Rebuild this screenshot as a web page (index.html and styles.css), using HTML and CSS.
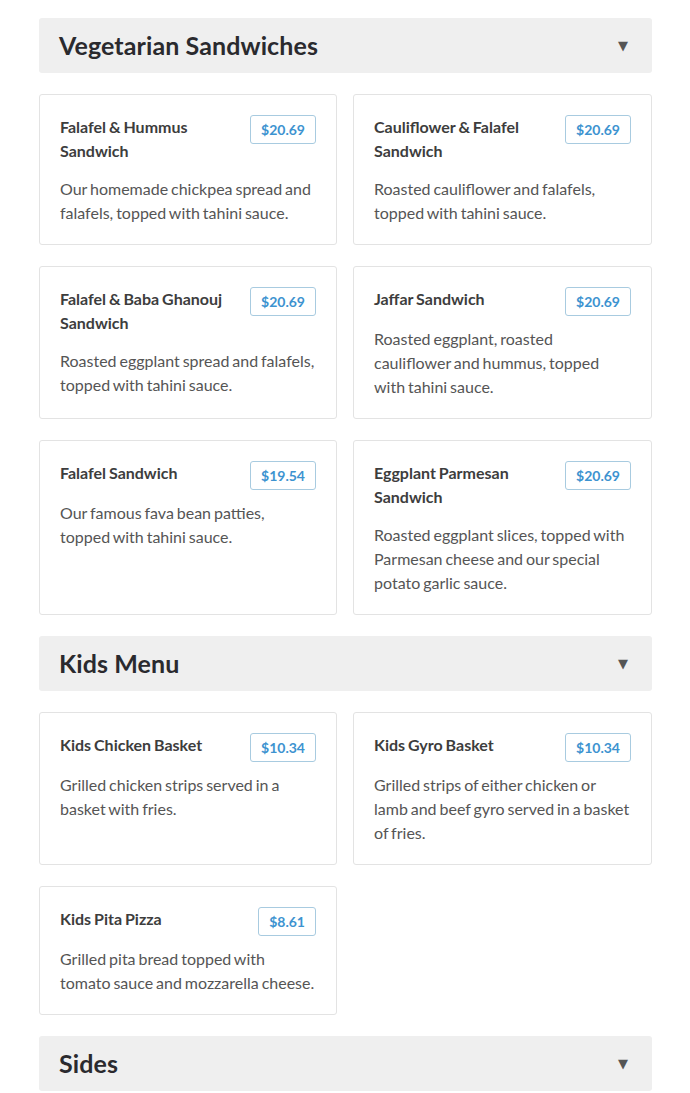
FILE: index.html
```html
<!DOCTYPE html>
<html>
<head>
<meta charset="utf-8">
<link rel="stylesheet" href="styles.css">
</head>
<body>
<div class="menu">
  <section class="section">
    <div class="section-head"><h2 class="section-title">Vegetarian Sandwiches</h2><span class="arrow">▼</span></div>
    <div class="grid">
      <div class="card"><div class="card-top"><h3 class="item-name">Falafel &amp; Hummus Sandwich</h3><span class="price">$20.69</span></div><p class="desc">Our homemade chickpea spread and falafels, topped with tahini sauce.</p></div>
      <div class="card"><div class="card-top"><h3 class="item-name">Cauliflower &amp; Falafel Sandwich</h3><span class="price">$20.69</span></div><p class="desc">Roasted cauliflower and falafels, topped with tahini sauce.</p></div>
      <div class="card"><div class="card-top"><h3 class="item-name">Falafel &amp; Baba Ghanouj Sandwich</h3><span class="price">$20.69</span></div><p class="desc">Roasted eggplant spread and falafels, topped with tahini sauce.</p></div>
      <div class="card"><div class="card-top"><h3 class="item-name">Jaffar Sandwich</h3><span class="price">$20.69</span></div><p class="desc">Roasted eggplant, roasted cauliflower and hummus, topped with tahini sauce.</p></div>
      <div class="card"><div class="card-top"><h3 class="item-name">Falafel Sandwich</h3><span class="price">$19.54</span></div><p class="desc">Our famous fava bean patties, topped with tahini sauce.</p></div>
      <div class="card"><div class="card-top"><h3 class="item-name">Eggplant Parmesan Sandwich</h3><span class="price">$20.69</span></div><p class="desc">Roasted eggplant slices, topped with Parmesan cheese and our special potato garlic sauce.</p></div>
    </div>
  </section>
  <section class="section">
    <div class="section-head"><h2 class="section-title">Kids Menu</h2><span class="arrow">▼</span></div>
    <div class="grid">
      <div class="card"><div class="card-top"><h3 class="item-name">Kids Chicken Basket</h3><span class="price">$10.34</span></div><p class="desc">Grilled chicken strips served in a basket with fries.</p></div>
      <div class="card"><div class="card-top"><h3 class="item-name">Kids Gyro Basket</h3><span class="price">$10.34</span></div><p class="desc">Grilled strips of either chicken or lamb and beef gyro served in a basket of fries.</p></div>
      <div class="card"><div class="card-top"><h3 class="item-name">Kids Pita Pizza</h3><span class="price">$8.61</span></div><p class="desc">Grilled pita bread topped with tomato sauce and mozzarella cheese.</p></div>
    </div>
  </section>
  <section class="section">
    <div class="section-head"><h2 class="section-title">Sides</h2><span class="arrow">▼</span></div>
  </section>
</div>
</body>
</html>
```
FILE: styles.css
```css
* { box-sizing: border-box; }
html, body { margin: 0; padding: 0; background: #fff; }
body { font-family: Lato, "Open Sans", sans-serif; color: #333; }
.menu { width: 613px; margin: 0 0 0 39px; padding-top: 18px; }
.section { margin-bottom: 21px; }
.section-head {
  display: flex; align-items: center; justify-content: space-between;
  height: 55px; background: #efefef; border-radius: 3px;
  padding: 0 24px 1px 20px;
}
.section-title { margin: 0; font-size: 25px; font-weight: 700; color: #2a2a2e; letter-spacing: 0.1px; }
.arrow { font-size: 13px; color: #555; font-family: "DejaVu Sans", sans-serif; }
.grid {
  display: grid; grid-template-columns: 298px 299px; column-gap: 16px; row-gap: 21px;
  margin-top: 21px;
}
.card {
  border: 1px solid #e3e3e3; border-radius: 3px; padding: 20px 20px 19px 20px;
}
.card-top { display: flex; justify-content: space-between; align-items: flex-start; gap: 12px; }
.item-name { margin: 0; font-size: 16px; font-weight: 700; line-height: 24px; color: #3d3d3d; word-spacing: -1px; }
.price {
  flex: none; border: 1px solid #a8cbe0; border-radius: 3px; color: #3d93d0;
  font-size: 14px; font-weight: 700; height: 29px; line-height: 27px; padding: 0 10px;
  margin-bottom: -3px;
}
.desc { margin: 14px 0 0; font-size: 16px; line-height: 24px; color: #555; word-spacing: -1.2px; }
```
